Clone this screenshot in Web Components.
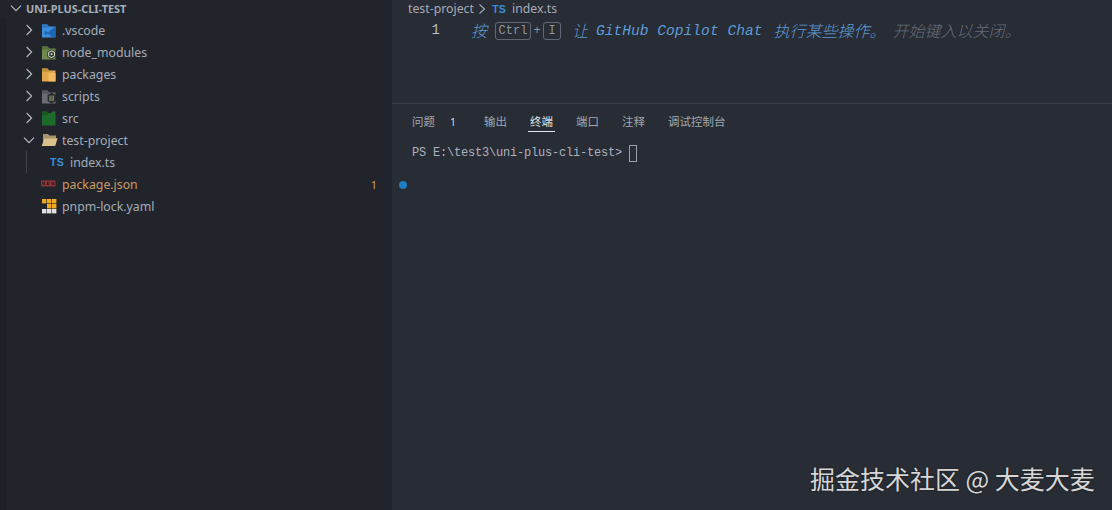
<!doctype html>
<html lang="zh"><head><meta charset="utf-8"><style>
html,body{margin:0;padding:0;background:#282c34;height:510px;overflow:hidden}
body{font-family:"Noto Sans","Noto Sans CJK SC",sans-serif}
</style></head><body>
<vs-app>
  <vs-sidebar slot="side">
    <vs-row icon="vscode" chev="r">.vscode</vs-row>
    <vs-row icon="node" chev="r">node_modules</vs-row>
    <vs-row icon="packages" chev="r">packages</vs-row>
    <vs-row icon="scripts" chev="r">scripts</vs-row>
    <vs-row icon="src" chev="r">src</vs-row>
    <vs-row icon="open" chev="d">test-project</vs-row>
    <vs-row icon="ts" indent>index.ts</vs-row>
    <vs-row icon="npm" modified badge="1">package.json</vs-row>
    <vs-row icon="pnpm">pnpm-lock.yaml</vs-row>
  </vs-sidebar>
  <vs-editor slot="main"></vs-editor>
  <vs-panel slot="main"></vs-panel>
</vs-app>
<vs-watermark>掘金技术社区 @ 大麦大麦</vs-watermark>
<script>
function def(name,html){customElements.define(name,class extends HTMLElement{
  connectedCallback(){ if(this.shadowRoot)return; const r=this.attachShadow({mode:'open'}); r.innerHTML=typeof html==='function'?html(this):html; }
});}
const folder=(c,tab,extra='')=>`<svg width="16" height="16" viewBox="0 0 16 16"><path d="M1 2.5h5.4L8 4.4h6.5v11H1z" fill="${c}"/><path d="M1 2.5h5.4L8 4.4v1.4H1z" fill="${tab}"/>${extra}</svg>`;
const icons={
 vscode:folder('#3d8fdc','#2f78bd','<path d="M14.5 4.5v10l-3 1-4.6-3.9-2 1.6-1.2-.7V9.5l1.2-.7 2 1.6 4.6-4z" fill="#1c67b3"/>'),
 node:folder('#6f8a4e','#5a733e','<path d="M10.6 5.2l4.2 2.4v5.2l-4.2 2.4-4.2-2.4V7.6z" fill="#24282d"/><path d="M10.6 6.8l2.9 1.6v3.5l-2.9 1.7-2.9-1.7V8.4z" fill="none" stroke="#c9d3b8" stroke-width="1.1"/><circle cx="10.6" cy="10.2" r="1.1" fill="#c9d3b8"/>'),
 packages:folder('#e2a84c','#c2903f','<rect x="7.5" y="7" width="7" height="8.4" fill="#f2bd60"/>'),
 scripts:folder('#6a6e72','#55585c','<path d="M10.6 4.8l4.2 2.3v6l-4.2 2.4-4-2.4v-6z" fill="#24282d"/><path d="M8.2 7.6h4.8v5.2H8.2z" fill="#7a8458"/><path d="M9.5 9h2.2M9.5 11h2.2" stroke="#24282d" stroke-width="1"/>'),
 src:`<svg width="16" height="16" viewBox="0 0 16 16"><path d="M1 1.5h4.6l1.4 1.5h3l1.4-1.5h3.1v14H1z" fill="#1d6a2b"/><path d="M1 1.5h4.6L7 3v2H1z" fill="#185a22"/></svg>`,
 open:`<svg width="18" height="16" viewBox="0 0 18 16"><path d="M3 2h5l1.4 1.6H16v3H5.4L3 13z" fill="#a8936a"/><path d="M4.6 6.2H17.6L15.2 14H1.6z" fill="#dcc08c"/></svg>`,
 ts:`<span style="font:700 10.5px 'Liberation Sans',sans-serif;color:#3b8ed8;display:block;width:16px;line-height:16px;text-align:center;letter-spacing:.2px">TS</span>`,
 npm:`<svg width="16" height="16" viewBox="0 0 16 16"><rect x="0" y="4.5" width="14.5" height="6" fill="#8d3434"/><path d="M1.4 6h2.4v3H1.4zM6 6h2.4v3H6zM10.6 6h2.6v3h-2.6z" fill="#2a1e22"/><path d="M2.4 6.5h.6v2.5h-.6zM7 6.5h.6v2h-.6zM11.4 6.5h.5v2.5h-.5z" fill="#8d3434"/></svg>`,
 pnpm:`<svg width="16" height="16" viewBox="0 0 16 16"><g fill="#f0a820"><rect x="1" y="1" width="4.4" height="4.4"/><rect x="6" y="1" width="4.4" height="4.4"/><rect x="11" y="1" width="4.4" height="4.4"/><rect x="6" y="6" width="4.4" height="4.4"/><rect x="11" y="6" width="4.4" height="4.4"/></g><g fill="#dfe2df"><rect x="1" y="11" width="4.4" height="4.4"/><rect x="6" y="11" width="4.4" height="4.4"/><rect x="11" y="11" width="4.4" height="4.4"/></g></svg>`
};
const chev={r:`<svg width="16" height="16" viewBox="0 0 16 16"><path d="M5.6 3l5 5-5 5" fill="none" stroke="#b6bcc6" stroke-width="1.1"/></svg>`,
 d:`<svg width="16" height="16" viewBox="0 0 16 16"><path d="M3 5.6l5 5 5-5" fill="none" stroke="#b6bcc6" stroke-width="1.1"/></svg>`};
def('vs-app',`<style>:host{display:flex;width:1112px;height:510px;background:#282c34}
 .side{width:392px;flex:none}.main{flex:1;min-width:0;display:flex;flex-direction:column}</style>
 <div class="side"><slot name="side"></slot></div><div class="main"><slot name="main"></slot></div>`);
def('vs-sidebar',`<style>:host{display:block;height:510px;background:#21252b;border-left:7px solid #1e2227;box-sizing:border-box;color:#abb2bf}
 .head{display:flex;align-items:center;height:16px;margin-left:-7px;padding:0 0 3px 8px;gap:2px;font:700 10.9px/15px "Noto Sans",sans-serif;color:#a8aeb9;background:#21252b}</style>
 <div class="head">${chev.d}<span>UNI-PLUS-CLI-TEST</span></div><div class="list"><slot></slot></div>`);
def('vs-row',el=>{
 const ind=el.hasAttribute('indent'),mod=el.hasAttribute('modified'),b=el.getAttribute('badge'),c=el.getAttribute('chev');
 return `<style>:host{display:block}
 .r{display:flex;align-items:center;height:22px;padding-left:${ind?42:14}px;font-size:12.3px;color:${mod?'#c99a62':'#a5acb8'};position:relative}
 .c{width:16px;height:16px;flex:none;margin-right:4px}
 .i{width:16px;height:16px;flex:none;margin-right:${c==='d'?6:5}px;${c==='d'?'margin-left:-1px;':''}}
 .t{flex:1}.b{font-size:11px;color:#c99a62;margin-right:15px}
 .g{position:absolute;left:19px;top:0;bottom:0;width:1px;background:#3d424a}</style>
 <div class="r">${ind?'<span class="g"></span>':''}${ind?'':`<span class="c">${c?chev[c]:''}</span>`}<span class="i">${icons[el.getAttribute('icon')]}</span><span class="t"><slot></slot></span>${b?`<span class="b">${b}</span>`:''}</div>`});
def('vs-editor',`<style>:host{display:block;height:103px;flex:none;box-sizing:border-box;background:#282c34;color:#abb2bf}
 .crumb{height:17px;display:flex;align-items:center;padding-left:16px;font-size:12.3px;color:#a5abb6}
 .ts{font:700 10.5px "Liberation Sans",sans-serif;color:#3b8ed8;width:16px;margin:0 5px 0 1px;text-align:center}
 .line{height:25px;margin-top:1px;display:flex;align-items:center;font:14.6px/25px "Liberation Mono",monospace;white-space:pre}
 .n{width:48px;text-align:right;color:#b8bdc6;flex:none;font-size:14px}
 .hint{margin-left:31px;font-style:italic;color:#5c9bd6;display:flex;align-items:center}
 .en{padding-top:1px}
 .zh{font:italic 16px/25px "Noto Sans CJK SC",sans-serif;font-weight:300;padding-bottom:1px}
 .gray{color:#666c77}
 kbd{font:12px "Liberation Mono",monospace;font-style:normal;color:#8d939e;border:1px solid #626873;border-radius:3px;height:16px;line-height:16px;display:inline-block;text-align:center;box-sizing:content-box}
 .k1{width:34px;margin-left:8px}.k2{width:16px}
 .plus{color:#8d939e;font:12px "Liberation Mono",monospace;width:12px;text-align:center}
 .gap1{width:11px}.gap2{width:8px}.gap3{width:11px}.gap4{width:7px}</style>
 <div class="crumb"><span>test-project</span><svg width="14" height="14" viewBox="0 0 14 14" style="margin:0 1px"><path d="M4.5 2.5l5 4.5-5 4.5" fill="none" stroke="#a5abb6" stroke-width="1.1"/></svg><span class="ts">TS</span><span>index.ts</span></div>
 <div class="line"><span class="n">1</span><span class="hint"><span class="zh">按</span><kbd class="k1">Ctrl</kbd><span class="plus">+</span><kbd class="k2">I</kbd><span class="gap1"></span><span class="zh">让</span><span class="gap2"></span><span class="en">GitHub Copilot Chat</span><span class="gap3"></span><span class="zh">执行某些操作。</span><span class="gap4"></span><span class="zh gray">开始键入以关闭。</span></span></div>`);
def('vs-panel',`<style>:host{display:block;flex:1;border-top:1px solid #3a3e46;background:#282c34;position:relative}
 .tabs{display:flex;height:36px;padding:0 0 0 20px;align-items:center;gap:23px;font-size:11.5px;color:#a0a6b1}
 .tab{position:relative;line-height:18px}
 .tab.on{color:#dfe2e8}.tab.on::after{content:"";position:absolute;left:-2px;right:-2px;bottom:-1px;height:1px;background:#e4e6ea}
 .num{margin-left:15px;margin-right:5px;color:#d7dae0;font-size:10.5px}
 .term{margin:4px 0 0 20px;font:12px/16px "Liberation Mono",monospace;letter-spacing:-.2px;color:#abb2bf;display:flex;align-items:center;height:18px}
 .cur{display:inline-block;width:6px;height:15px;border:1px solid #9aa0aa;margin-left:7px}
 .dot{width:8px;height:8px;border-radius:50%;background:#1f7cc0;margin:19px 0 0 7px}</style>
 <div class="tabs"><span class="tab">问题<span class="num">1</span></span><span class="tab">输出</span><span class="tab on">终端</span><span class="tab">端口</span><span class="tab">注释</span><span class="tab">调试控制台</span></div>
 <div class="term"><span>PS E:\\test3\\uni-plus-cli-test&gt;</span><span class="cur"></span></div>
 <div class="dot"></div>`);
def('vs-watermark',`<style>:host{position:absolute;left:810px;top:462px;font:25px/32px "Noto Sans CJK SC","Liberation Sans",sans-serif;color:#d6d6d6;white-space:nowrap;text-shadow:0 0 2px rgba(0,0,0,.5)}</style><slot></slot>`);
</script>
</body></html>
